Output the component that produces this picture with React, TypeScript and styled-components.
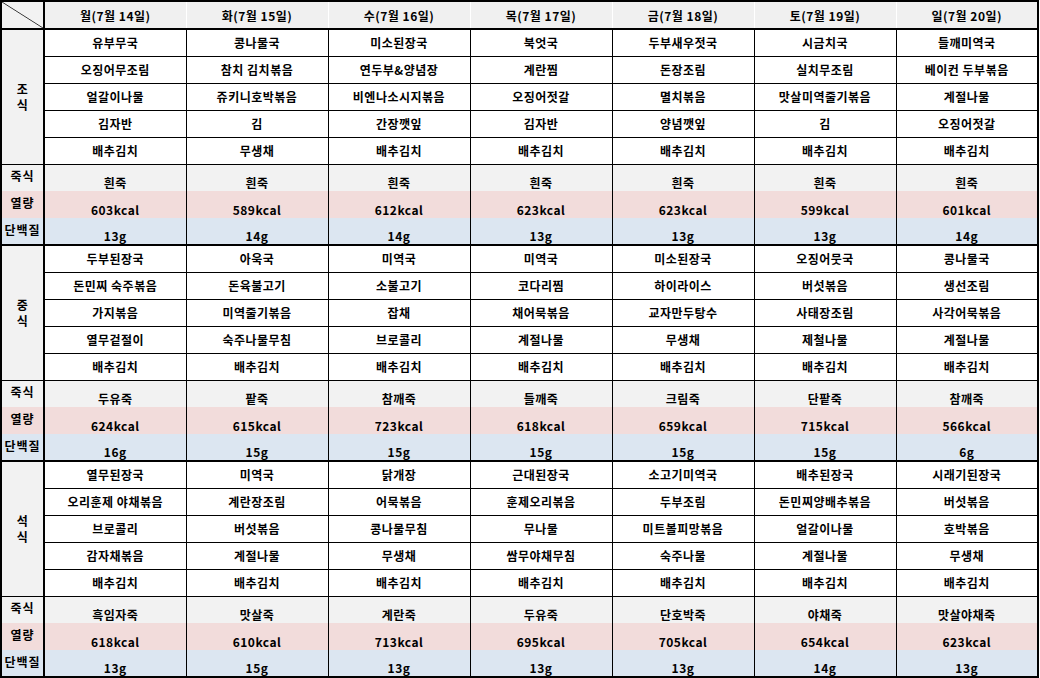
import React from 'react';
import styled, { createGlobalStyle } from 'styled-components';

const GlobalStyle = createGlobalStyle`
  html, body { margin: 0; padding: 0; background: #ffffff; }
  body { font-family: "Noto Sans CJK KR", "Noto Sans", sans-serif; }
`;

type Kind = 'dish' | 'porridge' | 'kcal' | 'protein';

const bgFor: Record<Kind, string> = {
  dish: '#ffffff',
  porridge: '#f2f2f2',
  kcal: '#f2dcdb',
  protein: '#dce6f1',
};

const Table = styled.table`
  border-collapse: collapse;
  table-layout: fixed;
  width: 1039px;
  border: 2px solid #000;
  font-family: "Noto Sans CJK KR", "Noto Sans", sans-serif;
  font-size: 12px;
  font-weight: 700;
  letter-spacing: 0.5px;
  color: #000;
`;

const HeadRow = styled.tr`
  height: 28px;
`;

const Row = styled.tr`
  height: 27px;
`;

const Corner = styled.th`
  border: 2px solid #000;
  background: linear-gradient(
    to top right,
    #f2f2f2 calc(50% - 0.8px),
    #333333 50%,
    #f2f2f2 calc(50% + 0.8px)
  );
  padding: 0;
`;

const HeadCell = styled.th`
  background: #f0f0f0;
  border-bottom: 2px solid #000;
  border-top: 2px solid #000;
  border-left: 1px solid #ffffff;
  border-right: 1px solid #ffffff;
  font-weight: 700;
  text-align: center;
  vertical-align: middle;
  padding: 0;
  white-space: nowrap;
`;

const SectionLabel = styled.td`
  background: #f2f2f2;
  border-right: 2px solid #000;
  border-top: 1px solid #000;
  text-align: center;
  vertical-align: middle;
  padding: 0;
  line-height: 16px;
`;

const InfoLabel = styled.td<{ $kind: Kind; $last?: boolean }>`
  background: ${p => bgFor[p.$kind]};
  border-right: 2px solid #000;
  border-top: ${p => (p.$kind === 'porridge' ? '1px solid #000' : 'none')};
  border-bottom: ${p => (p.$last ? '2px solid #000' : 'none')};
  text-align: center;
  vertical-align: middle;
  padding: 0 0 3px 0;
  line-height: 16px;
  white-space: nowrap;
  letter-spacing: 1px;
`;

const Cell = styled.td<{ $kind: Kind; $last?: boolean }>`
  background: ${p => bgFor[p.$kind]};
  border-left: 1px solid #000;
  border-right: 1px solid #000;
  border-top: ${p => (p.$kind === 'dish' || p.$kind === 'porridge' ? '1px solid #000' : 'none')};
  border-bottom: ${p => (p.$last ? '2px solid #000' : 'none')};
  text-align: center;
  vertical-align: ${p => (p.$kind === 'dish' ? 'middle' : 'bottom')};
  padding: 0;
  line-height: 16px;
  white-space: nowrap;
`;

interface DayMeal {
  dishes: string[];
  porridge: string;
  kcal: string;
  protein: string;
}

interface Section {
  name: string;
  days: DayMeal[];
}

const days = [
  '월(7월 14일)',
  '화(7월 15일)',
  '수(7월 16일)',
  '목(7월 17일)',
  '금(7월 18일)',
  '토(7월 19일)',
  '일(7월 20일)',
];

const sections: Section[] = [
  {
    name: '조식',
    days: [
      { dishes: ['유부무국', '오징어무조림', '얼갈이나물', '김자반', '배추김치'], porridge: '흰죽', kcal: '603kcal', protein: '13g' },
      { dishes: ['콩나물국', '참치 김치볶음', '쥬키니호박볶음', '김', '무생채'], porridge: '흰죽', kcal: '589kcal', protein: '14g' },
      { dishes: ['미소된장국', '연두부&양념장', '비엔나소시지볶음', '간장깻잎', '배추김치'], porridge: '흰죽', kcal: '612kcal', protein: '14g' },
      { dishes: ['북엇국', '계란찜', '오징어젓갈', '김자반', '배추김치'], porridge: '흰죽', kcal: '623kcal', protein: '13g' },
      { dishes: ['두부새우젓국', '돈장조림', '멸치볶음', '양념깻잎', '배추김치'], porridge: '흰죽', kcal: '623kcal', protein: '13g' },
      { dishes: ['시금치국', '실치무조림', '맛살미역줄기볶음', '김', '배추김치'], porridge: '흰죽', kcal: '599kcal', protein: '13g' },
      { dishes: ['들깨미역국', '베이컨 두부볶음', '계절나물', '오징어젓갈', '배추김치'], porridge: '흰죽', kcal: '601kcal', protein: '14g' },
    ],
  },
  {
    name: '중식',
    days: [
      { dishes: ['두부된장국', '돈민찌 숙주볶음', '가지볶음', '열무겉절이', '배추김치'], porridge: '두유죽', kcal: '624kcal', protein: '16g' },
      { dishes: ['아욱국', '돈육불고기', '미역줄기볶음', '숙주나물무침', '배추김치'], porridge: '팥죽', kcal: '615kcal', protein: '15g' },
      { dishes: ['미역국', '소불고기', '잡채', '브로콜리', '배추김치'], porridge: '참깨죽', kcal: '723kcal', protein: '15g' },
      { dishes: ['미역국', '코다리찜', '채어묵볶음', '계절나물', '배추김치'], porridge: '들깨죽', kcal: '618kcal', protein: '15g' },
      { dishes: ['미소된장국', '하이라이스', '교자만두탕수', '무생채', '배추김치'], porridge: '크림죽', kcal: '659kcal', protein: '15g' },
      { dishes: ['오징어뭇국', '버섯볶음', '사태장조림', '제철나물', '배추김치'], porridge: '단팥죽', kcal: '715kcal', protein: '15g' },
      { dishes: ['콩나물국', '생선조림', '사각어묵볶음', '계절나물', '배추김치'], porridge: '참깨죽', kcal: '566kcal', protein: '6g' },
    ],
  },
  {
    name: '석식',
    days: [
      { dishes: ['열무된장국', '오리훈제 야채볶음', '브로콜리', '감자채볶음', '배추김치'], porridge: '흑임자죽', kcal: '618kcal', protein: '13g' },
      { dishes: ['미역국', '계란장조림', '버섯볶음', '계절나물', '배추김치'], porridge: '맛살죽', kcal: '610kcal', protein: '15g' },
      { dishes: ['닭개장', '어묵볶음', '콩나물무침', '무생채', '배추김치'], porridge: '계란죽', kcal: '713kcal', protein: '13g' },
      { dishes: ['근대된장국', '훈제오리볶음', '무나물', '쌈무야채무침', '배추김치'], porridge: '두유죽', kcal: '695kcal', protein: '13g' },
      { dishes: ['소고기미역국', '두부조림', '미트볼피망볶음', '숙주나물', '배추김치'], porridge: '단호박죽', kcal: '705kcal', protein: '13g' },
      { dishes: ['배추된장국', '돈민찌양배추볶음', '얼갈이나물', '계절나물', '배추김치'], porridge: '야채죽', kcal: '654kcal', protein: '14g' },
      { dishes: ['시래기된장국', '버섯볶음', '호박볶음', '무생채', '배추김치'], porridge: '맛살야채죽', kcal: '623kcal', protein: '13g' },
    ],
  },
];

const SectionRows: React.FC<{ section: Section }> = ({ section }) => {
  const [first, second] = section.name.split('');
  return (
    <>
      {[0, 1, 2, 3, 4].map(i => (
        <Row key={`d${i}`}>
          {i === 0 && (
            <SectionLabel rowSpan={5}>
              {first}
              <br />
              {second}
            </SectionLabel>
          )}
          {section.days.map((d, j) => (
            <Cell key={j} $kind="dish">
              {d.dishes[i]}
            </Cell>
          ))}
        </Row>
      ))}
      <Row>
        <InfoLabel $kind="porridge">죽식</InfoLabel>
        {section.days.map((d, j) => (
          <Cell key={j} $kind="porridge">
            {d.porridge}
          </Cell>
        ))}
      </Row>
      <Row>
        <InfoLabel $kind="kcal">열량</InfoLabel>
        {section.days.map((d, j) => (
          <Cell key={j} $kind="kcal">
            {d.kcal}
          </Cell>
        ))}
      </Row>
      <Row>
        <InfoLabel $kind="protein" $last>
          단백질
        </InfoLabel>
        {section.days.map((d, j) => (
          <Cell key={j} $kind="protein" $last>
            {d.protein}
          </Cell>
        ))}
      </Row>
    </>
  );
};

export default function App() {
  return (
    <>
      <GlobalStyle />
      <Table>
        <colgroup>
          <col style={{ width: 43 }} />
          {days.map(d => (
            <col key={d} />
          ))}
        </colgroup>
        <thead>
          <HeadRow>
            <Corner />
            {days.map(d => (
              <HeadCell key={d}>{d}</HeadCell>
            ))}
          </HeadRow>
        </thead>
        <tbody>
          {sections.map(s => (
            <SectionRows key={s.name} section={s} />
          ))}
        </tbody>
      </Table>
    </>
  );
}
